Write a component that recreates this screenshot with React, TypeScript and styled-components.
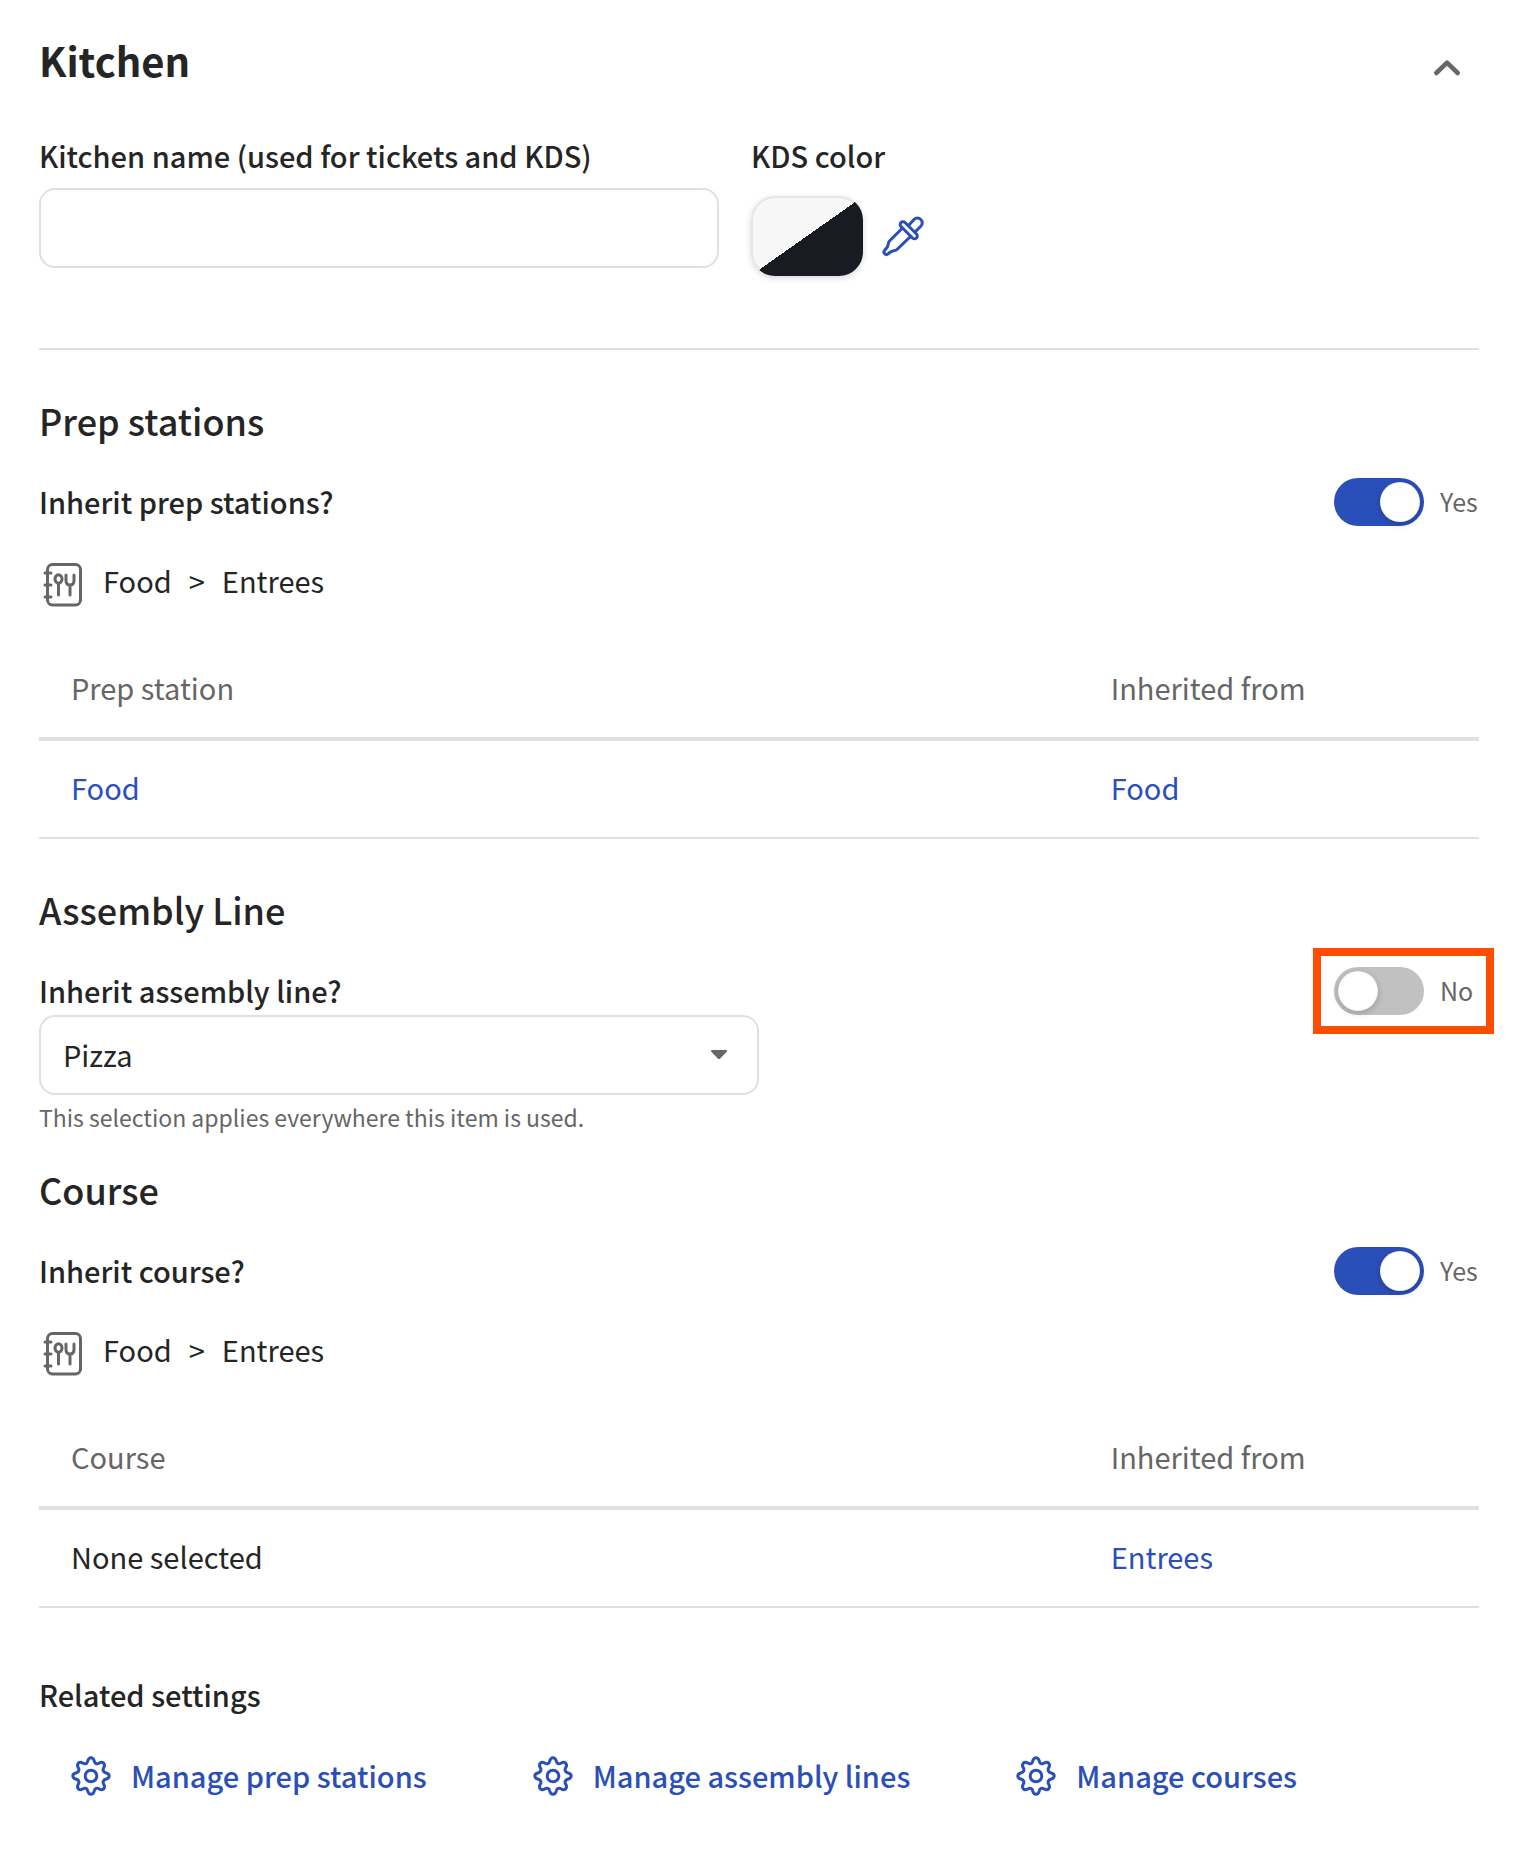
import React, { useState } from "react";
import styled, { createGlobalStyle } from "styled-components";

const color = {
  text: "#252525",
  muted: "#666666",
  line: "#e0e0e0",
  blue: "#2b4fb9",
  off: "#c1c1c1",
  callout: "#ff4c00",
};

const GlobalStyle = createGlobalStyle`
  *, *::before, *::after { box-sizing: border-box; }
  body {
    margin: 0;
    background: #ffffff;
    color: ${color.text};
    font-family: "Noto Sans CJK SC", "Noto Sans", sans-serif;
    font-size: 29px;
    line-height: 38px;
  }
  button, input, select { font: inherit; color: inherit; }
`;

const Page = styled.main`
  padding: 36px 41px 72px 39px;
`;

const Header = styled.header`
  display: flex;
  align-items: flex-start;
  justify-content: space-between;
  margin-bottom: 44px;
`;

const Title = styled.h1`
  margin: 0;
  font-size: 40px;
  line-height: 48px;
  font-weight: 700;
`;

const IconButton = styled.button`
  display: flex;
  padding: 0;
  border: 0;
  background: none;
  color: ${color.blue};
  cursor: pointer;
`;

const CollapseButton = styled(IconButton)`
  margin: 8px 8px 0 0;
  color: ${color.muted};
`;

const FieldRow = styled.div`
  display: flex;
  gap: 32px;
  padding-bottom: 72px;
  border-bottom: 2px solid ${color.line};
`;

const Field = styled.div<{ $width?: number }>`
  display: flex;
  flex-direction: column;
  gap: 12px;
  width: ${({ $width }) => ($width ? `${$width}px` : "auto")};
  max-width: 100%;
`;

const Label = styled.label`
  padding-bottom: 2px;
  font-weight: 500;
`;

const LabelText = styled.span`
  padding-bottom: 2px;
  font-weight: 500;
`;

const TextInput = styled.input`
  width: 100%;
  height: 80px;
  padding: 0 22px;
  border: 2px solid ${color.line};
  border-radius: 16px;
  background: #ffffff;
`;

const ColorRow = styled.div`
  display: flex;
  align-items: center;
  gap: 16px;
  padding-top: 8px;
`;

const Swatch = styled.button`
  width: 112px;
  height: 80px;
  padding: 0;
  border: 2px solid transparent;
  border-radius: 24px;
  background:
    linear-gradient(to bottom right, #f7f7f7 50%, #191b23 50%) padding-box,
    linear-gradient(to bottom right, #e6e6e6 50%, #191b23 50%) border-box;
  box-shadow: 0 2px 6px rgba(0, 0, 0, 0.16);
  cursor: pointer;
`;

const Section = styled.section`
  padding-top: 46px;
`;

const CourseSection = styled(Section)`
  padding-top: 32px;
`;

const SectionTitle = styled.h2`
  margin: 0 0 34px;
  font-size: 36px;
  line-height: 48px;
  font-weight: 500;
`;

const SettingRow = styled.div`
  display: flex;
  align-items: center;
  justify-content: space-between;
`;

const SwitchGroup = styled.div<{ $highlight?: boolean }>`
  position: relative;
  display: flex;
  align-items: center;
  gap: 16px;

  &::after {
    content: "";
    display: ${({ $highlight }) => ($highlight ? "block" : "none")};
    position: absolute;
    inset: -19px -15px -19px -21px;
    border: 8px solid ${color.callout};
    pointer-events: none;
  }
`;

const SwitchInput = styled.input`
  appearance: none;
  display: flex;
  width: 90px;
  height: 48px;
  margin: 0;
  padding: 4px;
  border-radius: 24px;
  background: ${color.off};
  cursor: pointer;

  &::before {
    content: "";
    width: 40px;
    height: 40px;
    border-radius: 50%;
    background: #ffffff;
    box-shadow: 0 2px 6px rgba(0, 0, 0, 0.22), inset 0 0 0 1px rgba(0, 0, 0, 0.06);
  }

  &:checked {
    justify-content: flex-end;
    background: ${color.blue};
  }
`;

const SwitchStatus = styled.span`
  width: 39px;
  padding-bottom: 2px;
  font-size: 25px;
  color: ${color.muted};
`;

const Breadcrumb = styled.nav`
  display: flex;
  gap: 16px;
  margin: 35px 0 32px;
`;

const Crumbs = styled.ol`
  display: flex;
  gap: 17px;
  margin: 0;
  padding: 0;
  list-style: none;
`;

const Table = styled.table`
  width: 100%;
  border-spacing: 0;
  table-layout: fixed;
`;

const cell = `
  padding: 27px 32px 31px;
  text-align: left;
  font-weight: 400;
`;

const HeadCell = styled.th<{ $width?: string }>`
  ${cell}
  width: ${({ $width }) => $width || "auto"};
  border-bottom: 4px solid ${color.line};
  color: ${color.muted};
`;

const Cell = styled.td`
  ${cell}
  border-bottom: 2px solid ${color.line};
`;

const Link = styled.a`
  color: ${color.blue};
  text-decoration: none;
`;

const SelectBox = styled.div`
  display: grid;
  align-items: center;
  width: 720px;
  max-width: 100%;

  > * { grid-area: 1 / 1; }
  > svg { justify-self: end; margin-right: 31px; pointer-events: none; }
`;

const Select = styled.select`
  appearance: none;
  width: 100%;
  height: 80px;
  padding: 0 64px 2px 22px;
  border: 2px solid ${color.line};
  border-radius: 16px;
  background: #ffffff;
`;

const Hint = styled.p`
  margin: 6px 0 0;
  font-size: 23px;
  line-height: 32px;
  color: ${color.muted};
`;

const Related = styled.section`
  padding-top: 67px;
`;

const RelatedTitle = styled.h3`
  margin: 0 0 42px;
  font-size: 29px;
  font-weight: 500;
`;

const RelatedLinks = styled.div`
  display: flex;
  flex-wrap: wrap;
  gap: 24px 106px;
  padding-left: 32px;
`;

const RelatedLink = styled(Link)`
  display: flex;
  align-items: center;
  gap: 20px;
  font-weight: 500;
`;

const ChevronUp = () => (
  <svg width="48" height="48" viewBox="0 0 48 48" fill="none" stroke="currentColor" strokeWidth="4.600" strokeLinecap="round" strokeLinejoin="round" aria-hidden="true">
    <path d="M13.300 29 24 18.700 34.700 29" />
  </svg>
);

const Eyedropper = () => (
  <svg width="48" height="48" viewBox="1 0 48 48" fill="none" stroke="currentColor" strokeWidth="3" strokeLinecap="round" strokeLinejoin="round" aria-hidden="true">
    <path d="M30.500 13.500 36 7.500a4.800 4.800 0 0 1 6.800 0 4.800 4.800 0 0 1 0 6.800L37 20" />
    <path d="M23 10.500a2.800 2.800 0 0 1 4 0L38.500 22a2.800 2.800 0 0 1-4 4L23 14.500a2.800 2.800 0 0 1 0-4Z" />
    <path d="M24 16.500 11.500 29c-1.500 1.500-1 4.500-2.500 6.500l-2.300 2.800a2.400 2.400 0 0 0 3.500 3.400l2.300-1.700c2-1.500 5-1 6.500-2.500L32 25" />
  </svg>
);

const MenuBook = () => (
  <svg width="48" height="48" viewBox="0 0 48 48" fill="none" stroke={color.muted} strokeWidth="3" strokeLinecap="round" strokeLinejoin="round" aria-hidden="true">
    <rect x="8.500" y="3.500" width="33" height="40.500" rx="5" />
    <path d="M6 12h6M6 24h6M6 36h6" />
    <ellipse cx="19.500" cy="18" rx="3.500" ry="4.200" />
    <path d="M19.500 22.500V34M31 24v10M27 14v5.500c0 3 1.800 4.500 4 4.500s4-1.500 4-4.500V14" />
  </svg>
);

const Gear = () => (
  <svg width="40" height="40" viewBox="0 -1 40 40" fill="none" stroke="currentColor" strokeWidth="3" strokeLinejoin="round" overflow="visible" aria-hidden="true">
    <circle cx="20" cy="20" r="5.800" />
    <path d="M16.700 5.200c.6-2.200 1.600-3.400 3.300-3.400s2.700 1.200 3.300 3.400c.5 2.300 2.600 3.200 4.600 2 2-1.200 3.500-1.300 4.700-.1s1.200 2.800 0 4.800c-1.200 2-.3 4.200 2 4.800 2.300.5 3.600 1.600 3.600 3.300s-1.300 2.800-3.600 3.300c-2.300.6-3.200 2.800-2 4.800s1.200 3.600 0 4.800-2.700 1.100-4.700-.1c-2-1.200-4.100-.3-4.600 2-.6 2.200-1.600 3.400-3.300 3.400s-2.700-1.200-3.300-3.400c-.5-2.300-2.600-3.200-4.600-2-2 1.200-3.500 1.300-4.700.1s-1.200-2.800 0-4.800c1.200-2 .3-4.200-2-4.800-2.300-.5-3.600-1.600-3.600-3.300s1.300-2.800 3.600-3.300c2.300-.6 3.200-2.800 2-4.800s-1.200-3.600 0-4.800 2.700-1.100 4.700.1c2 1.200 4.100.3 4.600-2Z" />
  </svg>
);

const Caret = () => (
  <svg width="18" height="12" viewBox="0 0 18 12" fill={color.muted} aria-hidden="true">
    <path d="M2 1h14c1 0 1.400 1 .7 1.700l-6.500 6.800c-.7.700-1.700.7-2.400 0L1.300 2.700C.6 2 1 1 2 1Z" />
  </svg>
);

type SwitchProps = { id: string; label: string; initial: boolean; highlight?: boolean };

function SwitchSetting({ id, label, initial, highlight }: SwitchProps) {
  const [on, setOn] = useState(initial);
  return (
    <SettingRow>
      <Label htmlFor={id}>{label}</Label>
      <SwitchGroup $highlight={highlight}>
        <SwitchInput id={id} type="checkbox" role="switch" checked={on} onChange={(e) => setOn(e.target.checked)} />
        <SwitchStatus>{on ? "Yes" : "No"}</SwitchStatus>
      </SwitchGroup>
    </SettingRow>
  );
}

function MenuPath() {
  return (
    <Breadcrumb aria-label="Menu path">
      <MenuBook />
      <Crumbs>
        <li>Food</li>
        <li aria-hidden="true">&gt;</li>
        <li>Entrees</li>
      </Crumbs>
    </Breadcrumb>
  );
}

type InheritedProps = { heading: string; value: React.ReactNode; source: string };

function InheritedTable({ heading, value, source }: InheritedProps) {
  return (
    <Table>
      <thead>
        <tr>
          <HeadCell scope="col" $width="72.2%">{heading}</HeadCell>
          <HeadCell scope="col">Inherited from</HeadCell>
        </tr>
      </thead>
      <tbody>
        <tr>
          <Cell>{value}</Cell>
          <Cell><Link href="#source">{source}</Link></Cell>
        </tr>
      </tbody>
    </Table>
  );
}

export default function App() {
  return (
    <>
      <GlobalStyle />
      <Page>
        <Header>
          <Title>Kitchen</Title>
          <CollapseButton type="button" aria-label="Collapse section"><ChevronUp /></CollapseButton>
        </Header>

        <FieldRow>
          <Field $width={680}>
            <Label htmlFor="kitchen-name">Kitchen name (used for tickets and KDS)</Label>
            <TextInput id="kitchen-name" type="text" />
          </Field>
          <Field>
            <LabelText id="kds-color">KDS color</LabelText>
            <ColorRow role="group" aria-labelledby="kds-color">
              <Swatch type="button" aria-label="Current color" />
              <IconButton type="button" aria-label="Pick a color"><Eyedropper /></IconButton>
            </ColorRow>
          </Field>
        </FieldRow>

        <Section>
          <SectionTitle>Prep stations</SectionTitle>
          <SwitchSetting id="inherit-prep" label="Inherit prep stations?" initial />
          <MenuPath />
          <InheritedTable heading="Prep station" value={<Link href="#food">Food</Link>} source="Food" />
        </Section>

        <Section>
          <SectionTitle>Assembly Line</SectionTitle>
          <SwitchSetting id="inherit-line" label="Inherit assembly line?" initial={false} highlight />
          <SelectBox>
            <Select aria-label="Assembly line" aria-describedby="line-hint" defaultValue="Pizza">
              <option>Pizza</option>
            </Select>
            <Caret />
          </SelectBox>
          <Hint id="line-hint">This selection applies everywhere this item is used.</Hint>
        </Section>

        <CourseSection>
          <SectionTitle>Course</SectionTitle>
          <SwitchSetting id="inherit-course" label="Inherit course?" initial />
          <MenuPath />
          <InheritedTable heading="Course" value="None selected" source="Entrees" />
        </CourseSection>

        <Related>
          <RelatedTitle>Related settings</RelatedTitle>
          <RelatedLinks>
            <RelatedLink href="#prep-stations"><Gear />Manage prep stations</RelatedLink>
            <RelatedLink href="#assembly-lines"><Gear />Manage assembly lines</RelatedLink>
            <RelatedLink href="#courses"><Gear />Manage courses</RelatedLink>
          </RelatedLinks>
        </Related>
      </Page>
    </>
  );
}
